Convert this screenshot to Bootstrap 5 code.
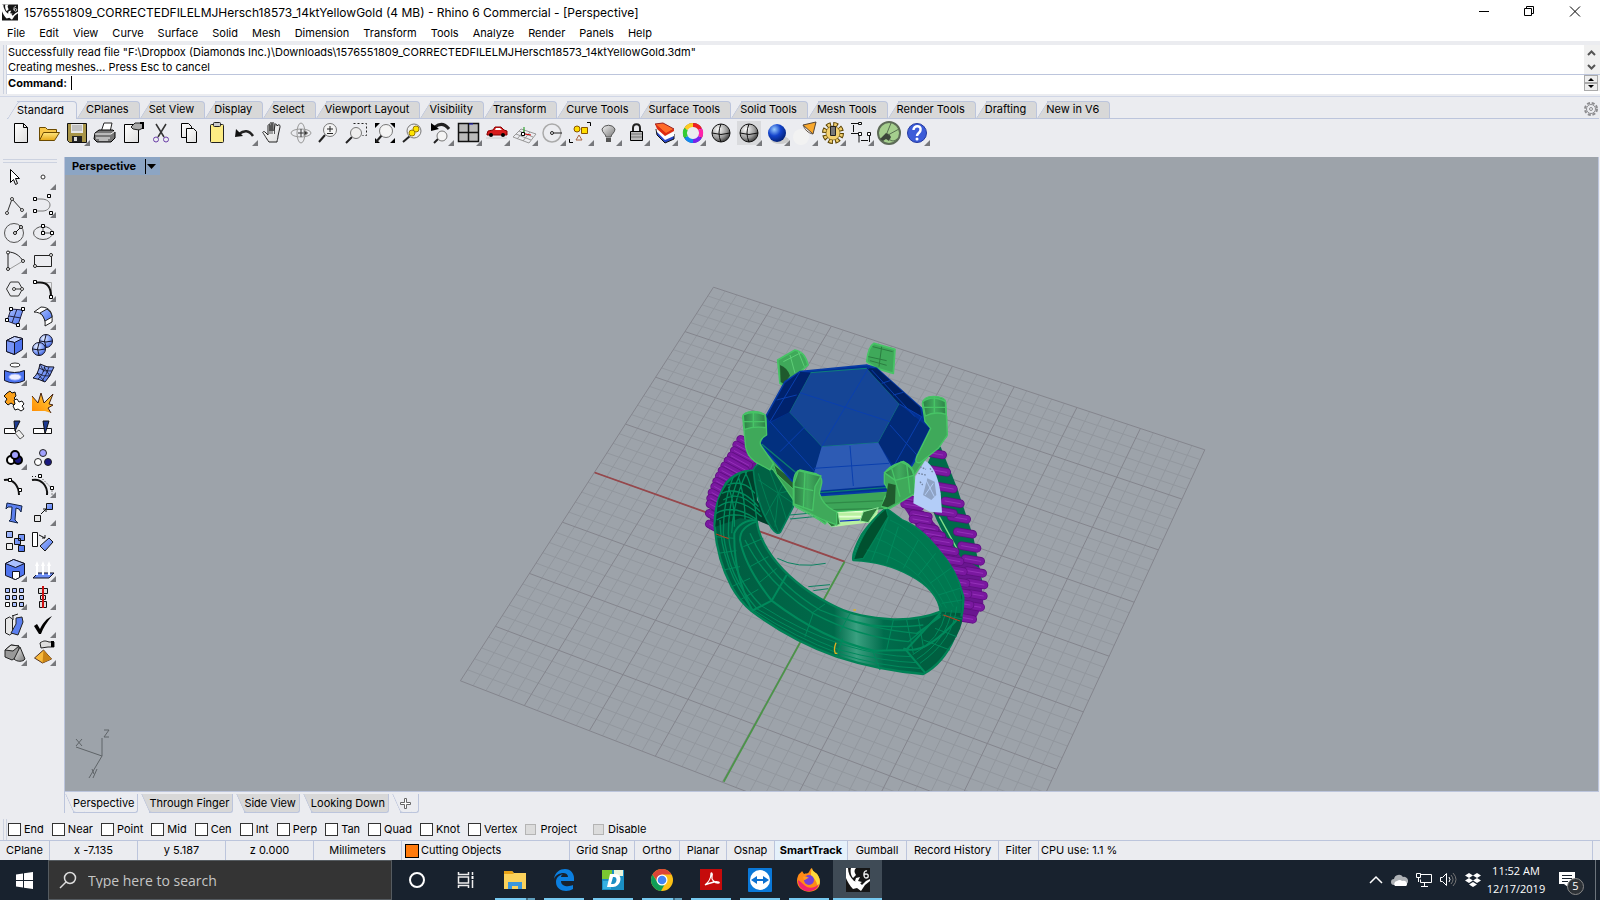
<!DOCTYPE html>
<html lang="en">
<head>
<meta charset="utf-8">
<meta name="viewport" content="width=device-width, initial-scale=1">
<title>Rhino 6 Commercial - [Perspective]</title>
<link href="https://cdn.jsdelivr.net/npm/bootstrap@5.3.0/dist/css/bootstrap.min.css" rel="stylesheet">
<style>
:root{--panel:#ebecf0;--edge:#bcc5dc;--idle:#d8d8d8}
html,body{height:100%}
body{font-family:Inter,"Open Sans",sans-serif;font-size:11px;line-height:15px;color:#000;background:var(--panel);overflow:hidden}
button{border:0;background:none;padding:0;color:inherit;font:inherit}
svg{display:block}
a{color:inherit;text-decoration:none}
.titlebar{height:24px;font-size:12px;padding-left:2px;gap:6px}
.winbtn{width:46px;height:20px}
.wingroup{margin-right:1px}
.menubar{height:17px;padding:1px 0 0 7px;gap:14px}
.cmdzone{height:56px;padding:4px 0 2px 3px;border-bottom:1px solid #d0d6e6}
.grip{width:4px;border:solid #ccd2e0;border-width:0 1px;flex:none}
.history{height:29px;padding-left:1px}
.prompt{height:19px;padding:0 0 2px 1px;border-top:1px solid var(--edge)}
.prompt input{border:0;outline:0;padding:0;height:16px;font:inherit}
.prompt .caret{width:1px;height:14px;background:#000;margin:0 0 0 4px}
.scrollcol{width:16px;background:#f0f0f0}
.spin{width:14px;height:8px;background:#eee;border:1px solid #aaa}
.tabrow{height:22px;padding-top:4px;border-bottom:1px solid var(--edge);margin-left:7px;margin-right:1px}
.ttab{position:relative;height:17px;padding:0 11px 0 9px;z-index:0}
.ttab::before,.ttab::after{content:"";position:absolute;top:0;bottom:0;background:var(--idle);border-top:1px solid var(--edge);z-index:-1}
.ttab::before{left:10px;right:0;border-right:1px solid var(--edge);border-top-right-radius:4px}
.ttab::after{left:0;width:16px;border-left:1px solid var(--edge);border-top-left-radius:3px;transform:skewX(-32deg);transform-origin:bottom}
.ttab.on{height:18px;padding:0 13px 0 10px}
.ttab.on::before,.ttab.on::after{background:var(--panel)}
.iconbar{height:38px;padding:0 0 0 7px}
.tool{width:28px;height:28px;flex:none}
.tool svg{width:28px;height:28px}
.sidebar{width:65px;padding:2px 0 0 0;border-right:1px solid var(--edge)}
.sidegrip{height:4px;margin:0 7px 0 3px;border:solid #ccd2e0;border-width:1px 0}
.toolgrid{display:grid;grid-template-columns:29px 28px;grid-auto-rows:28px}
.viewport{background:#9da3aa;border:solid var(--edge);border-width:1px 1px 1px 0;margin-right:1px;margin-top:-1px}
.vplabel{left:0;top:0;height:18px;background:#8ca5c4;font-weight:700;padding:0 4px 0 7px}
.vplabel i{width:1px;height:15px;background:#000;margin:0 1px 0 9px}
.vtabs{height:21px;padding-top:2px}
.vtab{position:relative;height:19px;padding:0 4px 0 8px;z-index:0}
.vtab+.vtab{margin-left:3px}
.vtab::before,.vtab::after{content:"";position:absolute;top:0;bottom:0;background:var(--idle);border-bottom:1px solid var(--edge);z-index:-1}
.vtab::before{left:8px;right:0;border-right:1px solid var(--edge);border-bottom-right-radius:3px}
.vtab::after{left:0;width:12px;border-left:1px solid var(--edge);border-bottom-left-radius:3px;transform:skewX(24deg);transform-origin:top}
.vtab.on::before,.vtab.on::after{background:var(--panel)}
.osnap{height:27px;padding:6px 0 0 3px}
.osnap .grip{margin-right:1px}
.osnap label{gap:3px;margin-right:8px}
.osnap input{appearance:none;width:13px;height:13px;border:1px solid #333;background:#fff;margin:0}
.osnap input:disabled{width:11px;height:11px;border-color:#b4b4b4;background:#dcdcdc;margin:0 1px 0 0}
.statusbar{height:20px;line-height:19px;border-top:1px solid var(--edge);display:grid;grid-template-columns:50px 88px 88px 88px 88px 168px 65px 45px 47px 48px 73px 59px 92px 40px 1fr 7px}
.statusbar>*{border-right:1px solid var(--edge);text-align:center;white-space:nowrap}
.statusbar>:last-child{border:0}
.layercell{padding-left:3px;gap:2px}
.cpucell{padding-left:2px}
.enabled{background:#e5f1fb;font-weight:700}
.swatch{width:14px;height:14px;background:#ff7a0c;border:1px solid #000}
.taskbar{height:40px;background:#18222e;color:#fff;font-family:"Open Sans",sans-serif}
.searchbox{width:344px;border:1px solid #555b60;background:#343434;font-size:14px;padding-left:10px;gap:11px}
.searchbox input{background:none;border:0;outline:0;color:#ccc;padding:0;font:inherit;width:260px}
.searchbox input::placeholder{color:#c6c6c6;opacity:1}
.startbtn{width:48px}
.startbtn svg{margin:auto}
.tbtn{width:49px;height:40px;flex:none;position:relative}
.tbtn svg{margin:auto}
.tbtn.open::after{content:"";position:absolute;left:5px;right:4px;bottom:0;height:2px;background:#76c9f0}
.tbtn.multi::after{background:linear-gradient(90deg,#76c9f0 31px,#3c6a80 31px,#3c6a80 33px,#5f9fbd 33px)}
.tbtn.active{background:#3f4b56}
.tbtn.active::after{left:0;right:0}
.clock{font-size:11px;line-height:18px;width:62px}
.notes{width:40px}
.count{left:16px;top:18px;width:17px;height:17px;border-radius:50%;background:#2c3136;border:1px solid #888;font-size:11px;line-height:14px}
.peek{width:5px;border-left:1px solid #6c747c}
</style>
</head>
<body class="d-flex flex-column">

<svg width="0" height="0" class="position-absolute" aria-hidden="true">
<defs>
<linearGradient id="paper" x1="0" y1="0" x2="1" y2="1"><stop offset="0" stop-color="#fff"/><stop offset="1" stop-color="#ddd"/></linearGradient>
<linearGradient id="gold" x1="0" y1="0" x2="0" y2="1"><stop offset="0" stop-color="#ffe680"/><stop offset="1" stop-color="#e6a817"/></linearGradient>
<linearGradient id="fire" x1="0" y1="1" x2="1" y2="0"><stop offset="0" stop-color="#ff8a00"/><stop offset="1" stop-color="#ffd040"/></linearGradient>
<linearGradient id="blu" x1="0" y1="0" x2="1" y2="1"><stop offset="0" stop-color="#a9bfff"/><stop offset="1" stop-color="#4a72ee"/></linearGradient>
<linearGradient id="gry" x1="0" y1="0" x2="1" y2="1"><stop offset="0" stop-color="#f4f4f4"/><stop offset="1" stop-color="#777"/></linearGradient>
<radialGradient id="ballg" cx=".35" cy=".3" r=".8"><stop offset="0" stop-color="#fff"/><stop offset=".6" stop-color="#999"/><stop offset="1" stop-color="#222"/></radialGradient>
<radialGradient id="ballb" cx=".35" cy=".3" r=".8"><stop offset="0" stop-color="#9cf"/><stop offset=".45" stop-color="#1444cc"/><stop offset="1" stop-color="#001a66"/></radialGradient>
<radialGradient id="ballp" cx=".35" cy=".3" r=".8"><stop offset="0" stop-color="#e8f0ff"/><stop offset=".6" stop-color="#7d9cf8"/><stop offset="1" stop-color="#3a5ad0"/></radialGradient>
<linearGradient id="metal"><stop offset="0" stop-color="#005c40"/><stop offset=".48" stop-color="#006a4a"/><stop offset=".57" stop-color="#3aa080"/><stop offset=".68" stop-color="#006c4c"/><stop offset="1" stop-color="#00563a"/></linearGradient>
<linearGradient id="prongtop" x1="0" y1="0" x2="1" y2="0"><stop offset="0" stop-color="#2c7f45"/><stop offset=".5" stop-color="#41ad5e"/><stop offset="1" stop-color="#2f8348"/></linearGradient>
<path id="tri" d="M27 21v6h-6z" fill="#77787c"/>
<symbol id="rhino" viewBox="0 0 24 24"><path fill="#161616" d="M0 0h24v24H0z"/><path fill="#fff" d="M0 0h2c0 5 2 9 6 13l5 1 3 3 4-4 4-2v2l-5 4-4 6-4-3-4 1c-3-3-6-8-7-11z"/><path fill="#fff" d="M5 0h5c-2 2-2 4 0 7l-3 3C5 8 4 3 5 0zM10 10l4-1-2 4 4 1-3 2-4-3z"/><path d="M21 3c-4-1-4 7-1 7 3 0 3-4 0-4-1 0-2 1-2 2" fill="none" stroke="#eee" stroke-width="1.3"/></symbol>
</defs>
</svg>

<header class="bg-white flex-shrink-0">
  <div class="titlebar d-flex align-items-center">
    <svg width="16" height="17"><use href="#rhino"/></svg>
    <span class="flex-grow-1">1576551809_CORRECTEDFILELMJHersch18573_14ktYellowGold (4 MB) - Rhino 6 Commercial - [Perspective]</span>
    <div class="wingroup d-flex">
    <button class="winbtn" aria-label="Minimize"><svg width="46" height="20"><path d="M18 9.500h10" stroke="#000"/></svg></button>
    <button class="winbtn" aria-label="Restore"><svg width="46" height="20" fill="none" stroke="#000"><path d="M17.500 6.500h7v7h-7zM19.500 6V4.500h7v7H25"/></svg></button>
    <button class="winbtn" aria-label="Close"><svg width="46" height="20" stroke="#000"><path d="M17 4.500l10 10M27 4.500l-10 10"/></svg></button>
    </div>
  </div>
  <nav class="menubar d-flex align-items-center">
    <a href="#">File</a><a href="#">Edit</a><a href="#">View</a><a href="#">Curve</a><a href="#">Surface</a><a href="#">Solid</a><a href="#">Mesh</a><a href="#">Dimension</a><a href="#">Transform</a><a href="#">Tools</a><a href="#">Analyze</a><a href="#">Render</a><a href="#">Panels</a><a href="#">Help</a>
  </nav>
</header>

<section class="cmdzone d-flex flex-shrink-0">
  <div class="grip"></div>
  <div class="flex-grow-1 bg-white">
    <div class="history d-flex">
      <div class="flex-grow-1 text-nowrap"><div>Successfully read file "F:\Dropbox (Diamonds Inc.)\Downloads\1576551809_CORRECTEDFILELMJHersch18573_14ktYellowGold.3dm"</div><div>Creating meshes... Press Esc to cancel</div></div>
      <div class="scrollcol"><svg width="16" height="28" fill="none" stroke="#555" stroke-width="2"><path d="M4 10l3.500-3.500L11 10M4 20l3.500 3.500L11 20"/></svg></div>
    </div>
    <div class="prompt d-flex align-items-center">
      <label for="cmd" class="fw-bold">Command:</label><span class="caret"></span><input id="cmd" class="flex-grow-1">
      <div class="scrollcol"><div class="spin"><svg width="12" height="6"><path d="M3 5l3-3 3 3z"/></svg></div><div class="spin"><svg width="12" height="6"><path d="M3 1l3 3 3-3z"/></svg></div></div>
    </div>
  </div>
</section>

<section class="flex-shrink-0">
  <div class="tabrow d-flex">
    <button class="ttab on">Standard</button><button class="ttab">CPlanes</button><button class="ttab">Set View</button><button class="ttab">Display</button><button class="ttab">Select</button><button class="ttab">Viewport Layout</button><button class="ttab">Visibility</button><button class="ttab">Transform</button><button class="ttab">Curve Tools</button><button class="ttab">Surface Tools</button><button class="ttab">Solid Tools</button><button class="ttab">Mesh Tools</button><button class="ttab">Render Tools</button><button class="ttab">Drafting</button><button class="ttab">New in V6</button>
    <button class="ms-auto" aria-label="Options"><svg width="16" height="16" fill="none" stroke="#8d8d90"><circle cx="8" cy="7" r="6" stroke-dasharray="3 1.710" stroke-width="2"/><circle cx="8" cy="7" r="4.500"/><circle cx="8" cy="7" r="1.500"/></svg></button>
  </div>
  <div class="iconbar d-flex">
    <button class="tool" aria-label="New"><svg><path d="M7.500 4.500h9l4 4v15h-13z" fill="url(#paper)" stroke="#000"/><path d="M16.500 4.500v4h4" fill="none" stroke="#000"/></svg></button>
    <button class="tool" aria-label="Open"><svg><path d="M4.500 21.500v-13h6l2 2h9v3" fill="#f8c84a" stroke="#6b4a00"/><path d="M4.500 21.500l4-8h16l-5 8z" fill="url(#gold)" stroke="#6b4a00"/></svg></button>
    <button class="tool" aria-label="Save"><svg><path d="M4.500 4.500h19v19h-17l-2-2z" fill="#a89548" stroke="#111"/><path d="M8 5h12v9H8z" fill="#e8e8e8"/><path d="M9 7h10M9 9h10M9 11h10" stroke="#999"/><path d="M9 17h10v6H9z" fill="#222"/><path d="M11 18h3v4h-3z" fill="#ddd"/><use href="#tri"/></svg></button>
    <button class="tool" aria-label="Print"><svg><path d="M10 13l3-9h8l-2 9" fill="#fff" stroke="#222"/><path d="M4 14l4-3h14l2 2v6l-4 4H6l-3-3z" fill="#777" stroke="#000"/><path d="M4 15h16l4-3M5 19h14M8 21h9" stroke="#fff" fill="none"/></svg></button>
    <button class="tool" aria-label="Properties"><svg><path d="M5.500 5.500h11l3 3v15h-14z" fill="url(#paper)" stroke="#000"/><path d="M12 8l4-4h8v5l-4 2-6-1z" fill="#aaa" stroke="#222"/><path d="M21 4h3v6" stroke="#000" stroke-width="2" fill="none"/></svg></button>
    <button class="tool" aria-label="Cut"><svg fill="none"><path d="M9 5l8 13M19 5l-8 13" stroke="#333" stroke-width="1.500"/><circle cx="9" cy="20.500" r="2.500" stroke="#6a3ea8"/><circle cx="19" cy="20.500" r="2.500" stroke="#6a3ea8"/></svg></button>
    <button class="tool" aria-label="Copy"><svg fill="url(#paper)" stroke="#000"><path d="M6.500 4.500h7l3 3v11h-10z"/><path d="M11.500 9.500h7l3 3v11h-10z"/></svg></button>
    <button class="tool" aria-label="Paste"><svg><rect x="7.500" y="5.500" width="13" height="18" rx="1" fill="#fdec84" stroke="#222"/><rect x="10.500" y="3.500" width="7" height="4" rx="1" fill="#ccc" stroke="#222"/></svg></button>
    <button class="tool" aria-label="Undo"><svg><path d="M8 15c5-4 10-4 14 2" fill="none" stroke="#222" stroke-width="2.500"/><path d="M4 18l1-8 7 7z" fill="#111"/><use href="#tri"/></svg></button>
    <button class="tool" aria-label="Pan"><svg><path d="M10 23c-3-4-5-8-6-9s1-2 2-1l3 3V7c0-2 2-2 2 0v5-7c0-2 2-2 2 0v7-7c0-2 2-2 2 0v7l1-6c0-2 2-1 2 1l1-1c2-1 2 1 2 2l-2 9c0 3-1 4-1 6z" fill="url(#paper)" stroke="#222"/><path d="M11 12v3M13 12v3M15.500 12v3" stroke="#555"/></svg></button>
    <button class="tool" aria-label="Rotate view"><svg fill="none" stroke="#999"><ellipse cx="14" cy="14" rx="10" ry="4"/><ellipse cx="14" cy="14" rx="4" ry="10"/><path d="M14 10v8M11 14h6" stroke="#333"/><path d="M17 11l4 3-4 3z" fill="#333"/></svg></button>
    <button class="tool" aria-label="Zoom"><svg><path d="M10 16l-6 7" stroke="#222" stroke-width="2"/><circle cx="15" cy="11" r="6.500" fill="#f4f4f4" stroke="#777"/><path d="M12 10h6M15 7v6M12 14.500h6" stroke="#222"/></svg></button>
    <button class="tool" aria-label="Zoom window"><svg><path d="M10.500 4.500h13v12h-4" fill="none" stroke="#222" stroke-dasharray="2 2"/><path d="M9 18l-6 6" stroke="#222" stroke-width="2"/><circle cx="13" cy="14" r="5.500" fill="#eee" stroke="#777"/></svg></button>
    <button class="tool" aria-label="Zoom extents"><svg><path d="M4 4h5l-5 5zM24 4v5l-5-5zM24 24h-5l5-5zM4 24v-5l5 5z"/><path d="M11 16l-6 7" stroke="#222" stroke-width="2"/><circle cx="15" cy="12" r="6.500" fill="#f4f4f4" stroke="#777"/></svg></button>
    <button class="tool" aria-label="Zoom selected"><svg><path d="M11 17l-7 6" stroke="#222" stroke-width="2"/><circle cx="15" cy="12" r="7" fill="#eee" stroke="#777"/><circle cx="17" cy="10" r="3" fill="#ffe500" stroke="#997a00"/><circle cx="13" cy="14" r="3" fill="#ffe500" stroke="#997a00"/></svg></button>
    <button class="tool" aria-label="Undo view"><svg><path d="M8 8c5-4 10-3 14 2" fill="none" stroke="#222" stroke-width="3"/><path d="M4 12V4l8 6z"/><path d="M12 19l-5 5" stroke="#222" stroke-width="2"/><circle cx="15" cy="17" r="5" fill="#f4f4f4" stroke="#777"/><use href="#tri"/></svg></button>
    <button class="tool" aria-label="Viewports"><svg><path d="M3.500 4.500h20v18h-20z" fill="#bbb" stroke="#111" stroke-width="1.500"/><path d="M13.500 4v18M4 13.500h20" stroke="#111" stroke-width="1.500"/><path d="M14 5h4" stroke="#22c"/><use href="#tri"/></svg></button>
    <button class="tool" aria-label="Named views"><svg><path d="M4 15l1-3 5-1 2-3h6l3 3 3 1v4H4z" fill="#d81c1c" stroke="#800"/><path d="M12 11l1-2h4l2 2z" fill="#fff"/><circle cx="8" cy="16" r="2"/><circle cx="20" cy="16" r="2"/><path d="M3 19h21" stroke="#ccc"/><use href="#tri"/></svg></button>
    <button class="tool" aria-label="CPlane"><svg fill="none" stroke="#999"><path d="M2 18l8-8 15 5-7 9zM5 15l15 6M8 12l14 6M6 20l8-9M12 22l7-9"/><path d="M13 14V8" stroke="#191"/><path d="M14 15l6 1" stroke="#c00"/><path d="M10.500 13.500h3v3h-3z" stroke="#000" fill="#fff"/><use href="#tri" stroke="none"/></svg></button>
    <button class="tool" aria-label="Object snap"><svg fill="none" stroke="#aaa"><circle cx="13" cy="14" r="9" stroke-width="1.500"/><path d="M14 14h9" stroke="#222"/><circle cx="13" cy="14" r="1.500" stroke="#222"/><use href="#tri" stroke="none"/></svg></button>
    <button class="tool" aria-label="Select"><svg><circle cx="10" cy="10" r="3" fill="#fd0" stroke="#850"/><path d="M14.500 8.500h6v6h-6z" fill="#fd0" stroke="#850"/><path d="M9 21l3-5 3 5z" fill="#eee" stroke="#a64"/><path d="M20 3.500h3.500V7M2.500 20v3.500H6" fill="none" stroke="#000"/><use href="#tri"/></svg></button>
    <button class="tool" aria-label="Hide"><svg><path d="M11 18c0-3-4-4-4-8a7 6 0 0 1 13 0c0 4-4 5-4 8z" fill="url(#gry)" stroke="#555"/><path d="M11 19h5v4h-5z" fill="#555"/><use href="#tri"/></svg></button>
    <button class="tool" aria-label="Lock"><svg><path d="M10 13V9c0-5 7-5 7 0v4" fill="none" stroke="#222" stroke-width="2"/><path d="M7.500 12.500h12v9h-12z" fill="#bbb" stroke="#000"/><path d="M8 15h11M8 18h11" stroke="#777"/><use href="#tri"/></svg></button>
    <button class="tool" aria-label="Layers"><svg><path d="M5 10l9 9 9-4v5l-9 4-8-8z" fill="#2846c8" stroke="#111"/><path d="M5 8l9 9 9-4v4l-9 4-8-8z" fill="#fff"/><path d="M4 5l8-1 11 6-8 5z" fill="#ff6a28" stroke="#922"/><path d="M4 5l11 9 8-4v2l-9 5-8-7z" fill="#e02b10"/><use href="#tri"/></svg></button>
    <button class="tool" aria-label="Color wheel"><svg fill="none" stroke-width="4"><circle cx="14" cy="14" r="9" stroke="#222" stroke-width="2"/><path d="M14 6a8 8 0 0 1 7 4" stroke="#e22"/><path d="M21 10a8 8 0 0 1 0 8" stroke="#f2a"/><path d="M21 18a8 8 0 0 1-7 4" stroke="#72e"/><path d="M14 22a8 8 0 0 1-7-4" stroke="#18e"/><path d="M7 18a8 8 0 0 1 0-8" stroke="#3c3"/><path d="M7 10a8 8 0 0 1 7-4" stroke="#fc2"/><use href="#tri"/></svg></button>
    <button class="tool" aria-label="Shade"><svg><circle cx="14" cy="14" r="9" fill="url(#ballg)" stroke="#111"/><path d="M5 14q9 3 18 0M14 5q-4 9 0 18" fill="none" stroke="#111"/></svg></button>
    <button class="tool" aria-label="Render preview"><svg><path d="M2 2h24v24H2z" fill="#d9dadd"/><circle cx="14" cy="14" r="9" fill="url(#ballg)" stroke="#111"/><path d="M5 14q9 3 18 0M14 5q-4 9 0 18" fill="none" stroke="#111"/><use href="#tri"/></svg></button>
    <button class="tool" aria-label="Render"><svg><ellipse cx="17" cy="21" rx="9" ry="4" fill="#ccc"/><circle cx="14" cy="14" r="9" fill="url(#ballb)"/><use href="#tri"/></svg></button>
    <button class="tool" aria-label="Spotlight"><svg><circle cx="10" cy="18" r="8" fill="#f2f2f2"/><path d="M12 6l13-3-3 12z" fill="#f9a82c" stroke="#543"/><path d="M12 6c2 5 5 8 10 9" fill="none" stroke="#654"/><use href="#tri"/></svg></button>
    <button class="tool" aria-label="Options"><svg><circle cx="14" cy="14" r="8.500" fill="none" stroke="#5a4200" stroke-width="5" stroke-dasharray="4.500 2.170"/><circle cx="14" cy="14" r="8.500" fill="none" stroke="#f2d070" stroke-width="3" stroke-dasharray="2.500 4.170" stroke-dashoffset="-1"/><circle cx="14" cy="14" r="7" fill="#f2d070" stroke="#5a4200" stroke-width=".5"/><path d="M11.500 7.500h5v9h-5z" fill="#777" stroke="#222"/><use href="#tri"/></svg></button>
    <button class="tool" aria-label="Dimension"><svg fill="none" stroke="#111"><path d="M4 4.500h8M4 14.500h8M6.500 6v7M12 14.500v9M22.500 14v9M14 21.500h7"/><path d="M11.500 3.500h3v2h-3zM11.500 13.500h3v3h-3zM20.500 13.500h3v3h-3z" fill="#fff"/><use href="#tri" stroke="none"/></svg></button>
    <button class="tool" aria-label="Grasshopper"><svg><circle cx="14" cy="14" r="11" fill="#a5cf8e" stroke="#5d6b57" stroke-width="2"/><path d="M5 20l6-6 3 1 2 3-2 4-3-2-3 2z" fill="#3c473a"/><path d="M12 14L16 4M13 16l11-6M14 20q4 4 8 0" stroke="#587050" fill="none"/></svg></button>
    <button class="tool" aria-label="Help"><svg><circle cx="14" cy="14" r="9.500" fill="#3c5cd8" stroke="#2238a0"/><path d="M10.500 11c0-5 8-5 7 0 0 3-3.500 3-3.500 6" fill="none" stroke="#fff" stroke-width="2.500"/><circle cx="14" cy="20" r="1.500" fill="#fff"/><use href="#tri"/></svg></button>
  </div>
</section>

<main class="d-flex flex-grow-1 overflow-hidden">
  <aside class="sidebar flex-shrink-0">
    <div class="sidegrip"></div>
    <div class="toolgrid">
      <button class="tool" aria-label="Pointer"><svg><path d="M10.500 6.500v13l3-3 2 5 2-1-2-5h4z" fill="#fff" stroke="#000"/></svg></button>
      <button class="tool" aria-label="Point"><svg><circle cx="14" cy="14" r="2" fill="#fff" stroke="#333"/><use href="#tri"/></svg></button>
      <button class="tool" aria-label="Polyline"><svg fill="#fff" stroke="#333"><path d="M7 22l5-14 10 11" fill="none"/><circle cx="7" cy="22" r="1.500"/><circle cx="12" cy="8" r="1.500"/><circle cx="22" cy="19" r="1.500"/><use href="#tri" stroke="none"/></svg></button>
      <button class="tool" aria-label="Curve"><svg fill="#fff" stroke="#000"><path d="M6 8h6c13 0 11 13 0 12H7" fill="none" stroke="#777"/><path d="M4.500 6.500h3v3h-3zM18.500 3.500h3v3h-3zM4.500 18.500h3v3h-3zM20.500 20.500h3v3h-3z"/><use href="#tri" stroke="none"/></svg></button>
      <button class="tool" aria-label="Circle"><svg fill="none" stroke="#555"><circle cx="14" cy="14" r="9.500"/><path d="M15 14l6-6" stroke="#111"/><circle cx="15" cy="14" r="1.500" fill="#fff" stroke="#111"/><circle cx="21" cy="8" r="1.500" fill="#fff" stroke="#111"/><use href="#tri" stroke="none"/></svg></button>
      <button class="tool" aria-label="Ellipse"><svg fill="none" stroke="#555"><ellipse cx="14" cy="14" rx="9.500" ry="6.500"/><path d="M14 7v7h9"/><path d="M12.500 5.500h3v3h-3zM12.500 12.500h3v3h-3zM21.500 12.500h3v3h-3z" fill="#fff" stroke="#000"/><use href="#tri" stroke="none"/></svg></button>
      <button class="tool" aria-label="Arc"><svg fill="#fff" stroke="#222"><path d="M8 23V5c7 0 12 4 15 9" fill="none"/><path d="M8 23l15-9" stroke="#999"/><circle cx="8" cy="5.500" r="1.500"/><circle cx="8" cy="22" r="1.500"/><circle cx="23" cy="14" r="1.500"/><use href="#tri" stroke="none"/></svg></button>
      <button class="tool" aria-label="Rectangle"><svg fill="#fff" stroke="#222"><path d="M5.500 8.500h17v11h-17z" fill="none"/><circle cx="22" cy="8" r="1.500"/><circle cx="6" cy="19" r="1.500"/><use href="#tri" stroke="none"/></svg></button>
      <button class="tool" aria-label="Polygon"><svg fill="none" stroke="#333"><path d="M6.500 14l4-7h8l4 7-4 7h-8z"/><path d="M14 14h8"/><circle cx="14" cy="14" r="1.500" fill="#fff"/><circle cx="22" cy="14" r="1.500" fill="#fff"/><use href="#tri" stroke="none"/></svg></button>
      <button class="tool" aria-label="Fillet"><svg fill="none"><path d="M6 7.500h16.500V22" stroke="#aaa"/><path d="M6 7.500h5c8 0 11 5 11 14" stroke="#111" stroke-width="2"/><path d="M4.500 5.500h3v3h-3zM20.500 20.500h3v3h-3z" fill="#fff" stroke="#000"/><use href="#tri"/></svg></button>
      <button class="tool" aria-label="Surface"><svg><path d="M11 6l12 1-5 15-11-4z" fill="url(#blu)" stroke="#224"/><path d="M17 6l-5 14M9 13l12 2" stroke="#224"/><path d="M9.500 4.500h3v3h-3zM21.500 4.500h3v3h-3zM5.500 15.500h3v3h-3zM16.500 20.500h3v3h-3z" fill="#fff" stroke="#000"/><use href="#tri"/></svg></button>
      <button class="tool" aria-label="Loft"><svg stroke="#222"><path d="M5 9l7-5c9 0 12 6 11 15l-7 4c1-8-3-14-11-14z" fill="#fff"/><path d="M11 10l7-4c3 2 5 5 5 8l-7 4c-1-3-2-6-5-8z" fill="url(#blu)"/><use href="#tri" stroke="none"/></svg></button>
      <button class="tool" aria-label="Box"><svg stroke="#112"><path d="M6.500 9.500v11l8 3 8-5v-11l-8-2z" fill="#4f74ee"/><path d="M6.500 9.500l8-4 8 2-8 4z" fill="#c4d2ff"/><path d="M6.500 9.500l8 2v12l-8-3z" fill="#7794f6"/><use href="#tri" stroke="none"/></svg></button>
      <button class="tool" aria-label="Boolean"><svg stroke="#112"><circle cx="17" cy="10" r="6.500" fill="url(#ballp)"/><circle cx="10" cy="18" r="6.500" fill="url(#ballp)"/><path d="M4 18q6 2 12 0M10 12q-3 6 0 12M11 10q6 2 12 0M17 4q-3 6 0 12" fill="none"/><use href="#tri" stroke="none"/></svg></button>
      <button class="tool" aria-label="Project"><svg><ellipse cx="15" cy="6" rx="5" ry="2" fill="#fff" stroke="#333"/><path d="M4.500 11.500q10 4 20 0v10q-10 5-20 0z" fill="#4a72ee" stroke="#112"/><ellipse cx="15" cy="18" rx="6" ry="3" fill="#eef" stroke="#abf"/><use href="#tri"/></svg></button>
      <button class="tool" aria-label="Mesh"><svg stroke="#112"><path d="M4 19q5-3 7-14 7 4 14 3-4 10-9 15-6-3-12-4z" fill="url(#blu)"/><path d="M8 14q7 4 13 3M10 9q6 4 13 3M16 7q-2 9-7 13M20 8q-3 9-7 14M11 5l4 8M8 14l7 8M15 8l6 9" fill="none" stroke-width=".8"/><use href="#tri" stroke="none"/></svg></button>
      <button class="tool" aria-label="Explode blocks"><svg stroke="#111"><path d="M7 6l3-2 2 2 3-1 1 4-2 2 3 3-3 4-3-2-3 2-3-3 2-3-3-3z" fill="#f9a01b"/><path d="M14 13l3-1 2 3 3-1 2 3-2 2 2 3-3 2-3-2-3 1-2-4 2-2z" fill="#fff"/></svg></button>
      <button class="tool" aria-label="Explode"><svg><path d="M3 24V9l6 7 3-10 3 10 9-9-4 10 4 1-5 3 3 5-6-2z" fill="url(#fire)"/><path d="M3 9l6 7 3-10 3 10 9-9-4 10 4 1-5 3 3 5" fill="none" stroke="#421"/></svg></button>
      <button class="tool" aria-label="Trim"><svg stroke="#111"><path d="M4.500 13.500h11v5h-11z" fill="#fff"/><path d="M15 18l4-3 5 6-4 3z" fill="#eee" stroke="#555"/><path d="M14 6h6l-5 10z" fill="#1c3a92"/></svg></button>
      <button class="tool" aria-label="Split"><svg stroke="#111"><path d="M4.500 13.500h18v5h-18z" fill="#fff"/><path d="M14 6h6l-4 13z" fill="#1c3a92"/></svg></button>
      <button class="tool" aria-label="Group"><svg stroke="#000" stroke-width="2"><circle cx="11" cy="17" r="4" fill="#fff"/><circle cx="18" cy="17" r="4" fill="#1a1a80"/><circle cx="15" cy="12" r="4" fill="#a0a0ff"/><use href="#tri" stroke="none"/></svg></button>
      <button class="tool" aria-label="Ungroup"><svg stroke="#222"><circle cx="9" cy="19" r="3.500" fill="#fff"/><circle cx="19" cy="19" r="3.500" fill="#1a1a80"/><circle cx="14" cy="10" r="3.500" fill="#a0a0ff"/></svg></button>
      <button class="tool" aria-label="Edit points"><svg fill="none"><path d="M4 9c9-2 15 6 15 15" stroke="#111" stroke-width="2"/><path d="M8.500 7.500h3v3h-3zM18.500 17.500h3v3h-3z" fill="#fff" stroke="#000"/></svg></button>
      <button class="tool" aria-label="Control points"><svg fill="none"><path d="M3 9c9-2 16 6 15 15" stroke="#111" stroke-width="2"/><path d="M3 5.500h8l12 12v7" stroke="#111" stroke-dasharray="1 2"/><path d="M9.500 3.500h3v3h-3zM21.500 15.500h3v3h-3z" fill="#fff" stroke="#000"/><use href="#tri"/></svg></button>
      <button class="tool" aria-label="Text object"><svg><path d="M7 4l15 3-1 6-2-3-3-1-1 12 3 3-9-2 2-2 1-12-4 0-2 2z" fill="#5c80f0" stroke="#124"/></svg></button>
      <button class="tool" aria-label="Move"><svg stroke="#111"><path d="M17.500 4.500h6v6h-6z" fill="url(#blu)"/><path d="M5.500 16.500h6v6h-6z" fill="#e6e6e6"/><path d="M12 15l5-5m-3 0h3v3" fill="none"/><use href="#tri" stroke="none"/></svg></button>
      <button class="tool" aria-label="Copy objects"><svg stroke="#111" fill="url(#blu)"><path d="M6.500 4.500h6v6h-6zM18.500 7.500h6v6h-6zM14.500 11.500h6v6h-6zM18.500 18.500h6v6h-6z"/><path d="M6.500 16.500h6v6h-6z" fill="#eee"/></svg></button>
      <button class="tool" aria-label="Orient"><svg stroke="#111"><path d="M3.500 5.500h5v14h-5z" fill="#fff"/><path d="M10 8l6 3m-3 0h3V8" fill="none"/><path d="M11 19l9-8 4 4-8 9z" fill="url(#blu)"/></svg></button>
      <button class="tool" aria-label="Shell"><svg stroke="#112"><path d="M5.500 8.500l8-4 11 4v11l-9 5-10-4z" fill="#4f74ee"/><path d="M5.500 8.500l8-4 11 4-9 4z" fill="#a9bfff"/><path d="M12.500 16.500h7v6l-4 2-3-1z" fill="#fff"/><use href="#tri" stroke="none"/></svg></button>
      <button class="tool" aria-label="Extrude"><svg><path d="M4 23l5-5h16l-5 5z" fill="#6d8ef4" stroke="#112"/><path d="M8 20V8M14 20V8M20 20V8" stroke="#fff" stroke-width="2"/><path d="M6 11l2-5 2 5zM12 11l2-5 2 5zM18 11l2-5 2 5z" fill="#fff"/><use href="#tri"/></svg></button>
      <button class="tool" aria-label="Array"><svg fill="#a9bfff" stroke="#111"><path d="M5.500 5.500h4v4h-4zM12.500 5.500h4v4h-4zM19.500 5.500h4v4h-4zM5.500 12.500h4v4h-4zM12.500 12.500h4v4h-4zM19.500 12.500h4v4h-4zM12.500 19.500h4v4h-4zM19.500 19.500h4v4h-4z"/><path d="M5.500 19.500h4v4h-4z" fill="#fff"/><use href="#tri" stroke="none"/></svg></button>
      <button class="tool" aria-label="Align"><svg fill="#ddd" stroke="#111"><path d="M9.500 5.500h9v5h-9zM11.500 12.500h5v4h-5zM10.500 18.500h7v6h-7z"/><path d="M14 3v22" stroke="#c11" stroke-width="2"/><use href="#tri" stroke="none"/></svg></button>
      <button class="tool" aria-label="Bend"><svg stroke="#222"><path d="M5.500 8l4-2 3 2v14l-3 2-4-2z" fill="#e6e6e6"/><path d="M12 5l6-2M13 4v5" fill="none"/><path d="M16 7l6-1 1 5-5 13-7-2 5-9z" fill="#5c80f0"/><use href="#tri" stroke="none"/></svg></button>
      <button class="tool" aria-label="Check"><svg><path d="M5 15l3-2 3 5C14 12 17 8 23 5 18 11 14 17 12 23h-2z"/><use href="#tri"/></svg></button>
      <button class="tool" aria-label="Render mesh"><svg stroke="#222"><path d="M5 11l6-5 8 1v10l-7 4-7-3z" fill="#999"/><path d="M5 11l6-5 8 1-6 5z" fill="#ddd"/><path d="M14 20l6-12 5 12c-2 3-8 3-11 0z" fill="url(#gry)"/><use href="#tri" stroke="none"/></svg></button>
      <button class="tool" aria-label="Properties page"><svg><path d="M11 4c4-3 6-2 9-1h5v5h-6l-7 1z" fill="#ddd" stroke="#222"/><path d="M22 2h3v6h-3z"/><path d="M5.500 19l9-8 8 9-9 4z" fill="#f8b93c" stroke="#532"/><path d="M14.500 11l8 9-9 4z" fill="#c98416"/><use href="#tri"/></svg></button>
    </div>
  </aside>

  <div class="d-flex flex-column flex-grow-1 overflow-hidden">
    <section class="viewport position-relative flex-grow-1 overflow-hidden">
      <svg width="100%" height="100%" viewBox="65 157 1533 634" preserveAspectRatio="xMidYMid slice" role="img" aria-label="Ring model in perspective">
        <g id="grid" fill="none"></g>
        <path d="M594.600 472.500L844.600 561.700" stroke="#96474b" stroke-width="1.800"/>
        <path d="M844.600 561.700L723.700 781.700" stroke="#4b9448" stroke-width="1.800"/>
        <g fill="none" stroke="#5f6468"><path d="M102 756l-26-9M102 756v-18M102 756l-13 22"/><path d="M76 739l6 7m0-7l-6 7M104 730h5l-5 7h5M92 769l2 5m3-5l-4 9"/></g>
        <g transform="translate(690 320) scale(.33333)" stroke-linejoin="round">
          <path d="M160 360L200 430 190 470 110 520 75 610 60 600 70 510 110 420z" fill="#6a1690"/>
          <g id="beadsLeft"></g>
          <path d="M735 380L752 380 800 500 850 650 880 800 820 760 740 600 690 480z" fill="#006b4a"/>
          <path d="M748 590L802 688" stroke="#7fe08a" stroke-width="4"/>
          <path d="M640 560L700 572 770 650 815 715 870 745 880 850 855 900 815 890 800 800 700 650z" fill="#6a1690"/>
          <g id="beadsRight"></g>
          <g fill="none" stroke="#0c8260" stroke-width="3"><path d="M262 715q60 32 145 15M300 585q60-8 120-6M300 597q60-5 110-12M355 800l65-6M370 812l45-6"/></g>
          <path d="M395 500h190l-30 105-120 15-50-35z" fill="#b8f0a0"/>
          <path d="M440 575h80M425 590h100" stroke="#e4ffd4" stroke-width="5"/>
          <path d="M425 605l100-6" stroke="#1230c0" stroke-width="4"/>
          <!-- shank -->
          <path fill="url(#metal)" stroke="#008256" stroke-width="7" d="M195 452Q140 450 108 490 72 550 74 620 82 720 125 800 150 845 185 873 300 960 440 1010 570 1052 700 1062 760 1030 792 955 822 890 820 830 800 750 745 690 690 620 635 600L588 565Q545 600 515 645 485 700 490 720 590 725 660 765 745 810 752 875 690 900 610 898 500 892 440 862 330 810 262 730 205 660 200 600z"/>
          <path d="M195 452Q120 455 85 540L76 620 150 595 200 600 270 630 200 540z" fill="#003f2b"/>
          <path d="M588 565Q520 620 490 720 590 725 660 765 745 810 752 875L815 880Q822 820 790 750 720 640 635 600z" fill="#007850"/>
          <path d="M588 565Q520 620 490 720l30-5 75-125z" fill="#00502f" stroke="#008256" stroke-width="4"/>
          <path d="M705 1055L650 990 752 878 818 890Q815 960 705 1055z" fill="#005f40"/>
          <g fill="none" stroke="#008a5c" stroke-width="3">
            <path stroke-width="6" d="M185 873L245 842 290 765M185 868Q130 760 133 640 150 600 200 600M245 842Q165 740 150 660 150 620 200 605M245 842Q400 960 552 992L648 990 752 878M648 990L705 1058M640 985Q700 1010 800 900"/>
            <path stroke-width="4" d="M85 560Q140 520 215 590M80 600Q130 570 190 598M95 520Q150 495 205 560M112 495Q160 475 195 520M130 470Q100 540 100 640 115 770 200 865M150 462Q115 540 115 640 125 770 215 858M170 456Q130 540 125 640M90 600Q92 740 190 872M165 456Q190 500 200 600M145 470Q165 530 165 598M115 500Q135 550 133 620M100 540Q150 505 210 575M78 580Q130 550 200 598"/>
            <path d="M78 650l55 5M84 700l55-8M100 750l50-10M125 800l55-25M150 840l55-32M160 680l60-25M180 740l55-30M205 790l55-45M365 880l40-28M345 950l25-72M450 935l30-55M440 1010l18-55M590 990l20-90M570 1050l-22-58M670 1000l-20-100M700 980l-15-85"/>
            <path stroke-width="4" d="M165 660Q230 790 370 880 500 950 655 965L752 885M180 640Q240 780 390 870 520 925 680 940L752 890M390 870Q450 895 540 915 620 925 700 915"/>
            <path d="M200 866Q330 945 450 990 580 1025 680 1028M215 858Q330 932 460 975 580 1010 665 1010M190 870Q320 955 445 1000 570 1040 690 1045"/>
            <path d="M690 1030Q790 960 800 860M680 1018Q770 960 785 870M668 1004Q750 960 768 875M755 850l62-10M745 825l65-20M720 790l62-45M685 765l52-65M640 745l45-85M590 730l35-110M545 722l50-130M700 960l80 30M735 925l65 25M755 885l62 12"/>
            <path d="M600 600Q720 650 805 850M580 625Q700 680 790 860M560 655Q680 700 770 865M530 690Q680 720 755 860" opacity=".7"/>
          </g>
          <path d="M190 450Q200 425 225 432 270 445 310 500L310 560 272 635Q262 648 245 625 200 560 190 450z" fill="#006244" stroke="#007f58" stroke-width="5"/>
          <path d="M265 520L310 510M265 520L310 550M265 520L290 600M265 520L255 620M265 520L225 590M265 520L205 480M265 520L235 440M265 520L290 470M205 460Q225 530 265 635" stroke="#008055" stroke-width="3" fill="none"/>
          <path d="M78 642l38 14M760 885l50 18" stroke="#c23a1c" stroke-width="3"/>
          <path d="M438 968q-8 20-2 32h6M490 870h8" fill="none" stroke="#e0b020" stroke-width="4"/>
          <!-- head and gallery -->
          <path d="M200 390L215 365 395 520 590 515 660 450 725 325 770 290 770 350 700 425 670 470 590 565 440 575 405 612 310 540 250 450 175 405z" fill="#3da558" stroke="#47c466" stroke-width="4"/>
          <path d="M250 432L320 490 310 508 260 462zM315 560l90 50" fill="#24612f" stroke="#47c466" stroke-width="3"/>
          <path d="M395 550l190-8M400 570l180-5" stroke="#2f8a47" stroke-width="4"/>
          <path d="M420 570l24 8 6 35-25 8-45-45zM520 575l45-12-30 45-25-5z" fill="#2d7a3c" stroke="#8fe79b" stroke-width="3"/>
          <!-- back prongs -->
          <path d="M263 120L315 90Q345 95 354 135L320 165 285 200 270 190z" fill="#3fa95a" stroke="#47c466" stroke-width="5"/>
          <path d="M270 135q22 8 30 32l-18 24-10-5z" fill="#1f5a2d"/>
          <path d="M300 105l15 55M325 95l18 45M280 125l55-28" stroke="#5dcd76" stroke-width="3"/>
          <path d="M530 125Q535 80 552 70L615 88 610 160 560 145z" fill="#3fa95a" stroke="#47c466" stroke-width="5"/>
          <path d="M535 110l55 12M540 122l50 14M575 80l-8 60M548 80l60 15" stroke="#2a7c40" stroke-width="3"/>
          <!-- stone -->
          <path d="M330 155L530 135 560 145 695 265 722 322 705 370 655 455 600 512 395 526 305 482 210 372 226 292 285 185z" fill="#023193" stroke="#073ba5" stroke-width="5"/>
          <path d="M362 158L530 145 628 252 565 368 395 380 298 277z" fill="#154596" stroke="#0f7f7a" stroke-width="3"/>
          <path d="M298 277L362 158 330 155 285 190 230 290 240 305z" fill="#00226d"/>
          <path d="M530 145L628 252 695 290 690 262 560 145z" fill="#001f60"/>
          <path d="M628 252L565 368 605 430 655 450 718 325z" fill="#022a78"/>
          <path d="M240 310L298 277 395 380 372 460 305 478 215 372z" fill="#02307f"/>
          <path d="M395 380L565 368 605 440 600 495 385 512 372 460z" fill="#2d5bb4"/>
          <path d="M330 218L600 305M535 145L395 380M480 378l10 120M372 445l225-15M240 305l135 150M270 395l75-75M628 252l67 38M695 290l-85 150M600 315l85 95M330 155l-90 150M260 240l60-15M545 150l130 140M575 190l25-8M610 225l30-8" fill="none" stroke="#0a3fae" stroke-width="3"/>
          <path d="M215 372L390 518 595 502 655 450" fill="none" stroke="#0c7a70" stroke-width="4"/>
          <!-- front prongs -->
          <g stroke="#47c466" stroke-width="4">
            <path d="M158 290Q160 275 190 274 225 275 228 295L230 345Q205 360 212 375L250 430 240 450 195 425Q165 405 165 360z" fill="#3fa95a"/>
            <path d="M160 285q30-15 65 0l3 38q-35-5-65 5z" fill="url(#prongtop)"/><path d="M162 305h62M190 276v45" fill="none"/>
            <path d="M697 250Q700 230 730 229 765 230 767 245L772 345 745 385 690 428Q672 430 680 410L722 325 705 305z" fill="#3fa95a"/>
            <path d="M698 245q30-22 68 0l2 38q-35-10-62 5z" fill="url(#prongtop)"/><path d="M700 262h66M733 230v48" fill="none"/>
            <path d="M310 490Q312 455 330 450L380 462Q398 470 395 490L388 520Q400 560 440 575L440 615 400 600 310 555z" fill="#3fa95a"/>
            <path d="M312 490L325 452 393 468 375 500 368 572 312 552z" fill="url(#prongtop)"/><path d="M345 455l-5 110M312 500l58 12" fill="none"/>
            <path d="M583 462Q590 440 640 424 672 440 672 465L675 520 600 565 575 560 585 530Q605 520 583 490z" fill="#3fa95a"/>
            <path d="M583 458l50-32q35 12 38 40l-55 15z" fill="url(#prongtop)"/><path d="M605 445l25 85M650 430l10 90" fill="none"/>
            <path d="M595 490l22 5-2 55-22 12-18-5 12-25z" fill="#1f5a2d" stroke="none"/>
          </g>
          <!-- side stone -->
          <path d="M705 422Q740 440 752 520L756 578 720 575 670 550 676 470z" fill="#b3cdf8"/>
          <path d="M712 475l22 10 5 40-15 15-25-15z" fill="#8fa3c4"/>
          <path d="M690 440l18 8M685 460l22 5M720 445l8 12M690 485l8 10" stroke="#72839f" stroke-width="4" stroke-dasharray="5 4"/>
          <path d="M708 480l25 50M730 490l-25 35" stroke="#b3cdf8" stroke-width="3"/>
        </g>
      </svg>
      <button class="vplabel position-absolute d-flex align-items-center">Perspective<i></i><svg width="9" height="5"><path d="M0 0h9L4.500 5z"/></svg></button>
    </section>
    <div class="vtabs d-flex flex-shrink-0">
      <button class="vtab on">Perspective</button><button class="vtab">Through Finger</button><button class="vtab">Side View</button><button class="vtab">Looking Down</button>
      <button class="vtab on pe-2" aria-label="Add viewport"><svg width="11" height="11"><path d="M4.500.5h2v4h4v2h-4v4h-2v-4h-4v-2h4z" fill="#fff" stroke="#666"/></svg></button>
    </div>
  </div>
</main>

<section class="osnap d-flex align-items-center flex-shrink-0">
  <div class="grip align-self-stretch"></div>
  <label class="d-flex align-items-center"><input type="checkbox">End</label>
  <label class="d-flex align-items-center"><input type="checkbox">Near</label>
  <label class="d-flex align-items-center"><input type="checkbox">Point</label>
  <label class="d-flex align-items-center"><input type="checkbox">Mid</label>
  <label class="d-flex align-items-center"><input type="checkbox">Cen</label>
  <label class="d-flex align-items-center"><input type="checkbox">Int</label>
  <label class="d-flex align-items-center"><input type="checkbox">Perp</label>
  <label class="d-flex align-items-center"><input type="checkbox">Tan</label>
  <label class="d-flex align-items-center"><input type="checkbox">Quad</label>
  <label class="d-flex align-items-center"><input type="checkbox">Knot</label>
  <label class="d-flex align-items-center"><input type="checkbox">Vertex</label>
  <label class="d-flex align-items-center me-3"><input type="checkbox" disabled>Project</label>
  <label class="d-flex align-items-center"><input type="checkbox" disabled>Disable</label>
</section>

<section class="statusbar flex-shrink-0">
  <button>CPlane</button><span>x -7.135</span><span>y 5.187</span><span>z 0.000</span><button>Millimeters</button>
  <button class="layercell d-flex align-items-center"><span class="swatch"></span>Cutting Objects</button>
  <button>Grid Snap</button><button>Ortho</button><button>Planar</button><button>Osnap</button><button class="enabled">SmartTrack</button><button>Gumball</button><button>Record History</button><button>Filter</button><span class="cpucell text-start">CPU use: 1.1 %</span><span></span>
</section>

<footer class="taskbar d-flex flex-shrink-0">
  <button class="startbtn" aria-label="Start"><svg width="17" height="17" fill="#fff"><path d="M0 2.500l7-1V8H0zM8 1.300L17 0v8H8zM0 9h7v6.500l-7-1zM8 9h9v8l-9-1.300z"/></svg></button>
  <div class="searchbox d-flex align-items-center"><svg width="18" height="18" fill="none" stroke="#ddd" stroke-width="1.500"><circle cx="11" cy="7" r="5.500"/><path d="M7 11l-6 6"/></svg><input type="text" placeholder="Type here to search" aria-label="Search"></div>
  <button class="tbtn" aria-label="Cortana"><svg width="18" height="18"><circle cx="9" cy="9" r="7" fill="none" stroke="#fff" stroke-width="2"/></svg></button>
  <button class="tbtn" aria-label="Task View"><svg width="18" height="16" fill="none" stroke="#eee" stroke-width="1.500"><path d="M1.500 0v2.500h10V0M1.500 5h10v6h-10zM1.500 16v-2.500h10V16M15.500 0v3M15.500 8v8"/><path d="M14.500 4h2v3h-2z" fill="#fff" stroke="none"/></svg></button>
  <button class="tbtn open multi" aria-label="File Explorer"><svg width="22" height="20"><path d="M0 1h8l2 2h12v16H0z" fill="#fbd25b"/><path d="M0 1h8l2 3H0z" fill="#e8a317"/><path d="M4 19v-7h14v7h-4v-3H8v3z" fill="#3a96dd"/></svg></button>
  <button class="tbtn open" aria-label="Edge"><svg width="22" height="22"><path d="M1 10C2 3 7 0 12 0c6 0 9 5 9 9v3H8c0 6 8 6 12 4v4c-6 4-17 2-17-7 0-5 4-7 7-8-2 1-2 3-2 3h7c0-6-11-5-14 2z" fill="#0b7fe0"/></svg></button>
  <button class="tbtn open" aria-label="Dashboard"><svg width="24" height="22"><path d="M1 1h22v20H1z" fill="#1a8fc4"/><path d="M1 1h10v9H1z" fill="#7ac832"/><path d="M13 1h9v6h-9z" fill="#e9f3da"/><path d="M2 12h8v8H2z" fill="#35b0e2"/><path d="M9 5h5c9 0 6 13-2 13H6zm3 3l-2 7h2c4 0 5-7 1-7z" fill="#fff" fill-rule="evenodd"/></svg></button>
  <button class="tbtn open multi" aria-label="Chrome"><svg width="22" height="22"><circle cx="11" cy="11" r="11" fill="#fbc116"/><path d="M1.500 5.500A11 11 0 0 1 20.500 5.500H11L7 13z" fill="#db4437"/><path d="M1.500 5.500A11 11 0 0 0 10 22l5-9-8 1z" fill="#0f9d58"/><circle cx="11" cy="11" r="5.500" fill="#fff"/><circle cx="11" cy="11" r="4.300" fill="#4285f4"/></svg></button>
  <button class="tbtn open" aria-label="Acrobat"><svg width="22" height="22"><path d="M0 0h22v21H0z" fill="#c50b0b"/><path d="M5 16c4-3 6-8 6-11 0-2 2-1 1 2-1 4 3 7 6 7s0-2-4-1-7 2-9 3z" fill="none" stroke="#fff" stroke-width="1.300"/></svg></button>
  <button class="tbtn open" aria-label="TeamViewer"><svg width="24" height="24"><rect width="24" height="24" rx="1" fill="#0a78d8"/><circle cx="12" cy="12" r="10" fill="#fff"/><path d="M3 12l6-4v3h6V8l6 4-6 4v-3H9v3z" fill="#0a6fd0"/></svg></button>
  <button class="tbtn open" aria-label="Firefox"><svg width="24" height="24"><path d="M1 8c1-3 3-3 4-5l2 3c2-1 4 0 5-2 1-2 1-3 3-4 0 3 3 4 5 6 4 5 4 11 0 15-5 4-12 3-16 0-4-3-5-9-3-13z" fill="#ff8a16"/><path d="M15 0c0 3 3 4 5 6 3 4 4 9 1 13-1-4-3-9-7-11 0-3 0-5 1-8z" fill="#ffd83a"/><path d="M1 12c0 8 6 12 12 11 5 0 8-4 9-7-3 3-8 5-12 3s-5-5-9-7z" fill="#f0246c"/><circle cx="12" cy="12" r="5" fill="#7540d8"/><path d="M6 9c2-1 5 0 6 1-2 0-3 2-5 2z" fill="#ff9a26"/></svg></button>
  <button class="tbtn open active" aria-label="Rhino"><svg width="24" height="24"><use href="#rhino"/></svg></button>
  <div class="ms-auto d-flex align-items-center">
    <button class="me-2" aria-label="Show hidden icons"><svg width="14" height="10" fill="none" stroke="#fff" stroke-width="1.500"><path d="M1 8l6-6 6 6"/></svg></button>
    <button class="me-2" aria-label="OneDrive"><svg width="17" height="12"><path d="M3 11a3 3 0 0 1 0-6 5 5 0 0 1 9-2 4 4 0 0 1 2 8z" fill="#aeb2b6"/><path d="M4 12a3 3 0 0 1 2-5q3-2 5 0 5-1 5 4l-1 1z" fill="#fff"/></svg></button>
    <button class="me-2" aria-label="Network"><svg width="16" height="14" fill="none" stroke="#fff"><path d="M5 1.500h10.500v8h-11v-3M8.500 10v3M5 13.500h7M.5.500h4v4h-4zM2.500 5v4"/></svg></button>
    <button class="me-2" aria-label="Volume"><svg width="17" height="14" fill="none" stroke="#fff"><path d="M.5 4.500h2l4-4v12l-4-4h-2z"/><path d="M9 4q2 2.500 0 5"/><path d="M11 2q4 4.500 0 9M13 0q6 6.500 0 13" stroke="#777"/></svg></button>
    <button aria-label="Dropbox"><svg width="16" height="14" fill="#fff"><path d="M4 0l4 2.500L4 5 0 2.500zM12 0l4 2.500L12 5 8 2.500zM4 5l4 2.500L4 10 0 7.500zM12 5l4 2.500-4 2.500-4-2.500zM8 9l4 2.500L8 14l-4-2.500z"/></svg></button>
    <div class="clock text-center ms-1">11:52 AM<br>12/17/2019</div>
    <button class="notes position-relative align-self-stretch ms-1 me-1" aria-label="Notifications"><svg width="17" height="16" class="ms-2"><path d="M0 0h16v12H9v3l-4-3H0z" fill="#fff"/><path d="M3 3.500h10M3 6.500h10M3 9.500h6" stroke="#18222e"/></svg><span class="count position-absolute">5</span></button>
    <div class="peek align-self-stretch"></div>
  </div>
</footer>

<script src="https://cdn.jsdelivr.net/npm/bootstrap@5.3.0/dist/js/bootstrap.bundle.min.js"></script>
<script>
// Perspective projection of the construction plane; u and v run from 0 to 1 across it.
function project(u, v) {
  const w = 1 - 0.053 * u - 0.111 * v;
  return ((427.4 * u - 304.2 * v + 713.5) / w).toFixed(1) + ' ' + ((138.8 * u + 318 * v + 287.2) / w).toFixed(1);
}
function lines(major) {
  let d = '';
  for (let i = 0; i <= 40; i++) {
    if ((i % 5 === 0) !== major) continue;
    const t = i / 40;
    d += 'M' + project(t, 0) + 'L' + project(t, 1) + 'M' + project(0, t) + 'L' + project(1, t);
  }
  return d;
}
document.getElementById('grid').innerHTML =
  '<path stroke="#92979e" d="' + lines(false) + '"/><path stroke="#84858d" d="' + lines(true) + '"/>';

// Rows of small claws, each a rounded tube with a lighter ridge.
function tubes(id, points, dx, dy) {
  document.getElementById(id).innerHTML = points.map(([x, y]) => {
    const d = 'M' + x + ' ' + y + 'l' + dx + ' ' + dy;
    return '<g fill="none" stroke-linecap="round"><path stroke="#5f1080" stroke-width="26" d="' + d + '"/><path stroke="#7a18a0" stroke-width="21" d="' + d + '"/><path stroke="#9430b8" stroke-width="3" d="' + d + '"/></g>';
  }).join('');
}
tubes('beadsLeft', [[152,358],[140,375],[133,392],[124,408],[114,422],[104,438],[96,452],[88,468],[80,484],[74,500],[66,518],[62,535],[60,552],[58,580],[58,612]], 52, 28);
tubes('beadsRight', [[758,405],[770,457],[790,507],[811,551],[830,598],[848,643],[861,685],[872,724],[878,760],[882,795],[880,828],[872,862],[848,898],
  [665,540],[690,560],[715,590],[790,580],[715,605],[735,628],[755,648],[778,668],[795,695],[810,725],[820,755],[828,790],[834,822],[840,855]], -46, -8);
</script>
</body>
</html>
